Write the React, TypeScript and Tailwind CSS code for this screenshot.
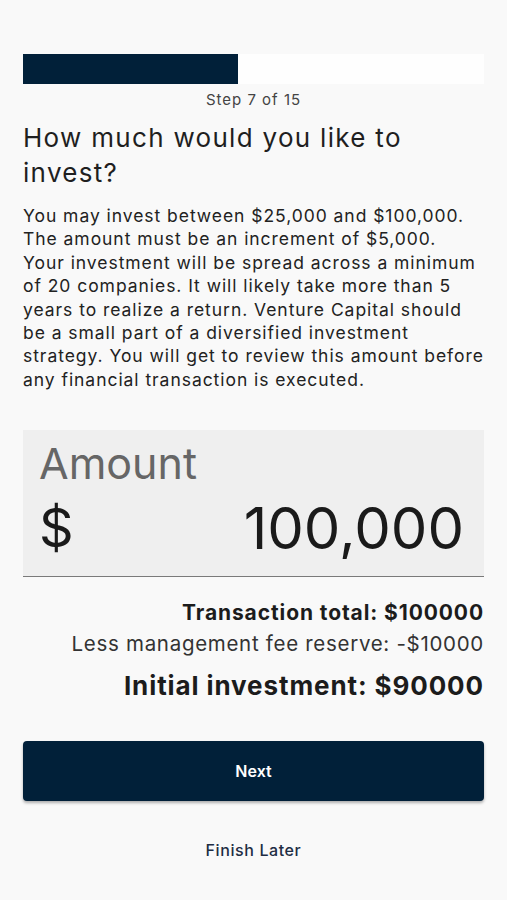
import React from "react";

const lines = [
  "You may invest between $25,000 and $100,000.",
  "The amount must be an increment of $5,000.",
  "Your investment will be spread across a minimum",
  "of 20 companies. It will likely take more than 5",
  "years to realize a return. Venture Capital should",
  "be a small part of a diversified investment",
  "strategy. You will get to review this amount before",
  "any financial transaction is executed.",
];

export default function App() {
  return (
    <div
      className="w-[507px] h-[900px] bg-[#f9f9f9] text-[#1c1c1c] overflow-hidden"
      style={{ fontFamily: "Inter, 'Noto Sans', sans-serif" }}
    >
      <div className="px-[23px] pt-[54px]">
        <div className="h-[30px] w-full bg-[#fefefe] flex">
          <div className="h-full w-[215px] bg-[#012039]" />
        </div>
        <div className="text-center text-[15px] leading-[18px] text-[#444] mt-[7px] tracking-[1px]">Step 7 of 15</div>
        <h1 className="mt-[11px] text-[26px] leading-[35px] text-[#1f1f1f] tracking-[1.3px]">
          <span className="block whitespace-nowrap">How much would you like to</span>
          <span className="block whitespace-nowrap">invest?</span>
        </h1>
        <p className="mt-[14px] text-[17.5px] leading-[23.4px] text-[#222] tracking-[0.95px]">
          {lines.map((l) => (
            <span key={l} className="block whitespace-nowrap">
              {l}
            </span>
          ))}
        </p>
        <div className="mt-[39px] h-[147px] bg-[#efefef] border-b border-[#7a7a7a] px-[16px] flex flex-col">
          <div className="mt-[10px] text-[43px] leading-[46px] text-[#666]">Amount</div>
          <div className="flex items-center justify-between mt-[11px] pr-[4px]">
            <span className="text-[54px] leading-[60px] text-[#1a1a1a]">$</span>
            <span className="text-[58px] leading-[62px] text-[#1a1a1a]">100,000</span>
          </div>
        </div>
        <div className="flex flex-col items-end mt-[23px]">
          <div className="text-[21px] leading-[26px] font-bold text-[#1c1c1c] tracking-[0.9px]">
            Transaction total: $100000
          </div>
          <div className="mt-[5px] text-[20.5px] leading-[26px] text-[#333] tracking-[0.7px]">
            Less management fee reserve: -$10000
          </div>
          <div className="mt-[13px] text-[26px] leading-[32px] font-bold text-[#1c1c1c] tracking-[0.9px]">
            Initial investment: $90000
          </div>
        </div>
        <button className="mt-[39px] w-full h-[60px] rounded-[4px] bg-[#012039] text-white text-[16px] font-semibold shadow-[0_2px_3px_rgba(0,0,0,0.3)]">
          Next
        </button>
        <div className="mt-[37px] text-center text-[16px] font-medium text-[#1e2d44] tracking-[0.6px]">Finish Later</div>
      </div>
    </div>
  );
}
